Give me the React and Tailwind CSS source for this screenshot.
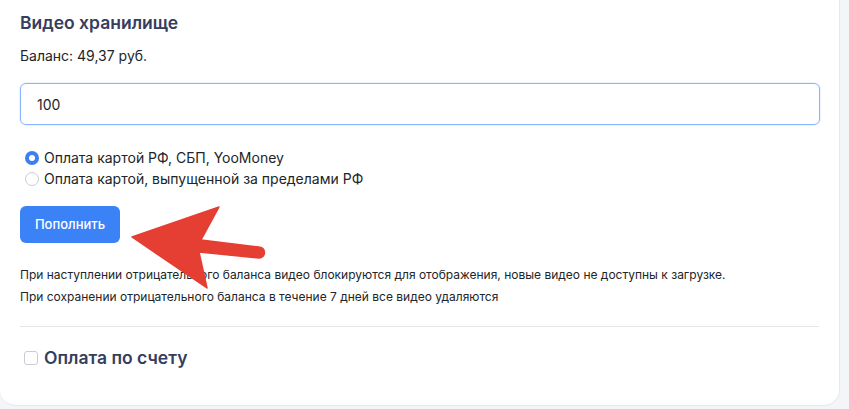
export default function App() {
  return (
    <div className="h-[409px] w-[849px] overflow-hidden bg-[#f4f5f8]" style={{ fontFamily: "Inter, 'Noto Sans', sans-serif" }}>
      <div className="relative h-[406px] w-[840px] rounded-b-2xl border-r border-b border-[#e6e8ee] bg-white px-5 pt-[10px] text-[#212529]">
        <h2 className="text-[17.5px] font-semibold leading-[26px] text-[#363d5e]">Видео хранилище</h2>
        <p className="mt-[10px] text-[14px] leading-5">Баланс: 49,37 руб.</p>

        <div className="mt-[17px] flex h-[42px] w-[800px] items-center rounded-md border border-[#86b7fe] px-4 text-[14px] shadow-[0_0_0_1px_rgba(134,183,254,0.15)]">
          100
        </div>

        <div className="mt-[22px] flex flex-col pl-[5px] text-[14px] leading-[21px]">
          <label className="flex items-center gap-[5px]">
            <span className="flex h-[14px] w-[14px] items-center justify-center rounded-full bg-[#3b7ff0]">
              <span className="h-[6px] w-[6px] rounded-full bg-white" />
            </span>
            Оплата картой РФ, СБП, YooMoney
          </label>
          <label className="flex items-center gap-[5px]">
            <span className="h-[14px] w-[14px] rounded-full border border-[#c9cdd3]" />
            Оплата картой, выпущенной за пределами РФ
          </label>
        </div>

        <button className="mt-[17px] flex h-[37px] w-[100px] items-center justify-center rounded-md bg-[#3b82f6] text-[13px] font-medium text-white">
          Пополнить
        </button>

        <div className="mt-[21px] text-[12px] leading-[22px]">
          <p>При наступлении отрицательного баланса видео блокируются для отображения, новые видео не доступны к загрузке.</p>
          <p>При сохранении отрицательного баланса в течение 7 дней все видео удаляются</p>
        </div>

        <div className="mt-[18px] border-t border-[#e5e7eb]" />

        <label className="mt-[19px] flex items-center gap-[6px] pl-[4px]">
          <span className="h-[14px] w-[14px] rounded-[3px] border border-[#c9cdd3]" />
          <span className="text-[17.5px] font-semibold leading-6 text-[#363d5e]">Оплата по счету</span>
        </label>

        <svg className="pointer-events-none absolute left-0 top-0" width="849" height="409" viewBox="0 0 849 409">
          <path
            d="M132 237 L219 207 L201 240 L259 247 A5.5 5.5 0 0 1 259 258 L199 252 L207 288 Z"
            fill="#e53e33"
            stroke="#e53e33"
            strokeWidth="1.5"
            strokeLinejoin="round"
          />
        </svg>
      </div>
    </div>
  )
}
